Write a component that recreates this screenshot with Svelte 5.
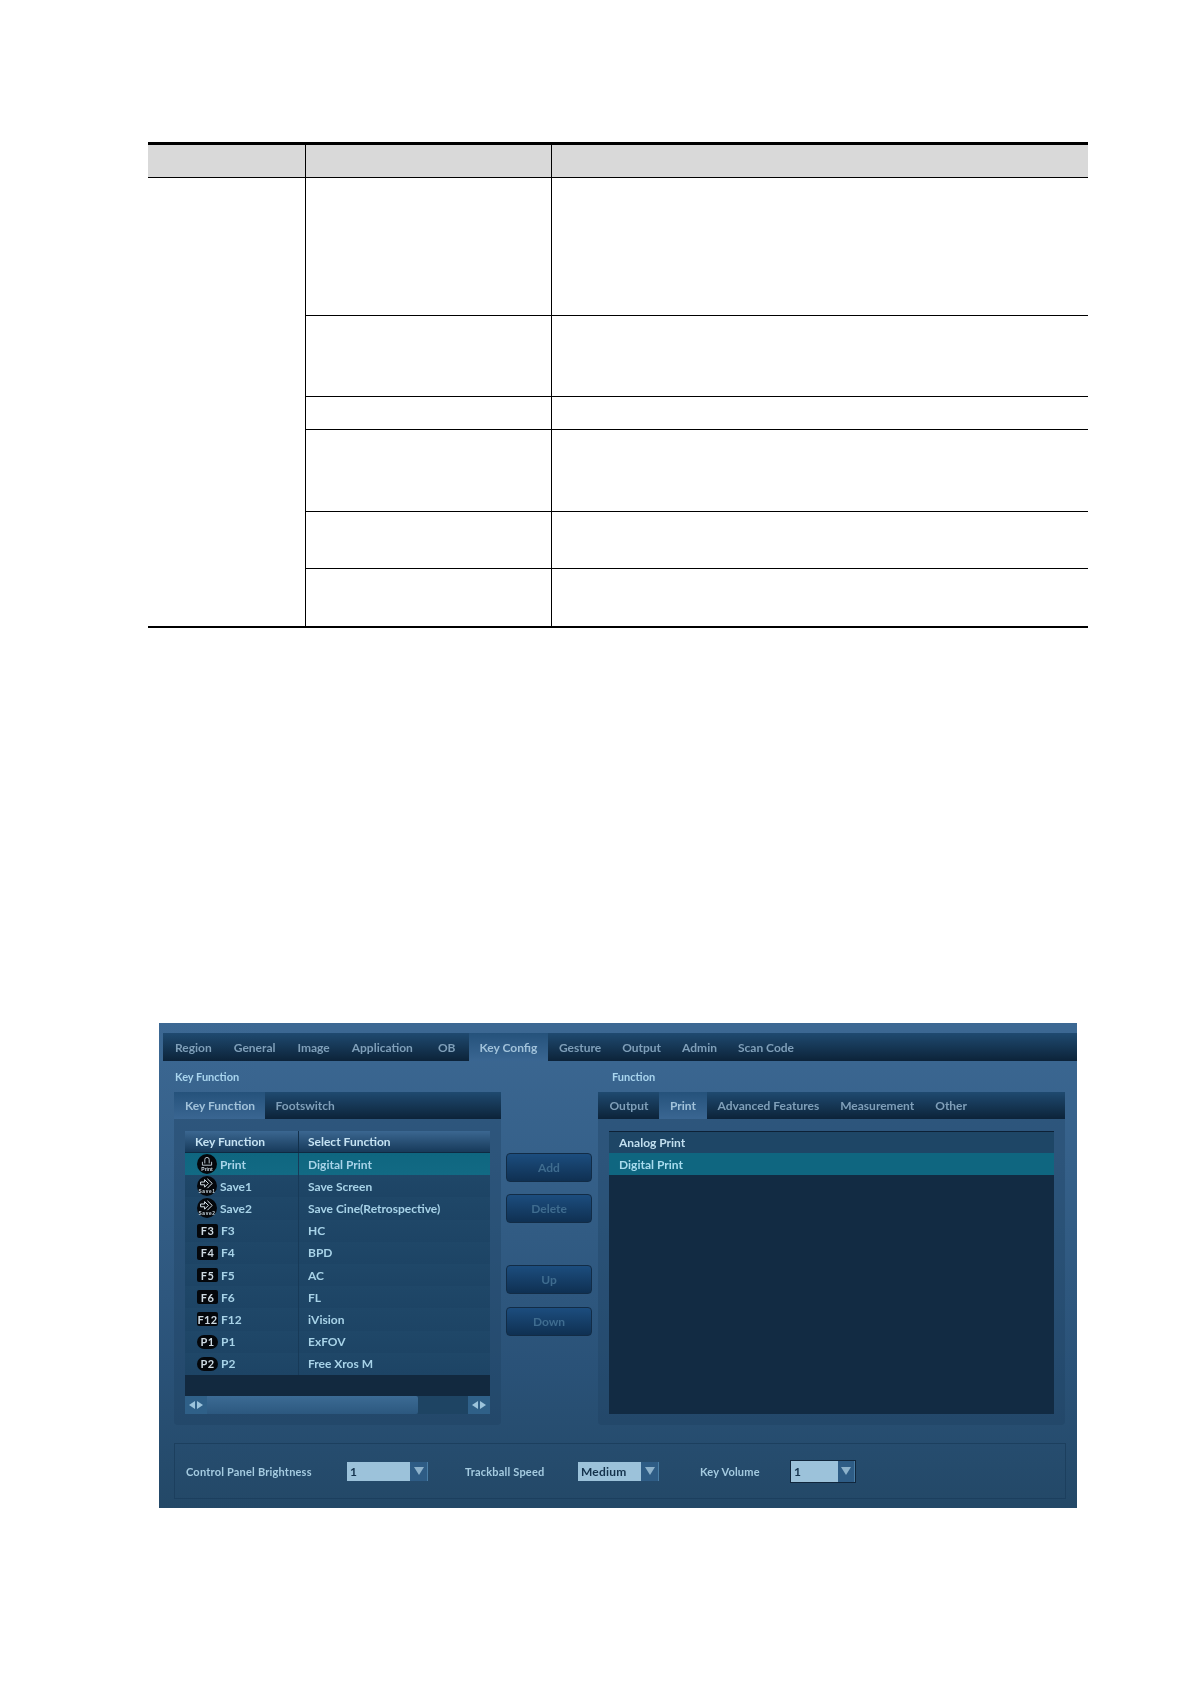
<script>
  const mainTabs = ['Region', 'General', 'Image', 'Application', 'OB', 'Key Config', 'Gesture', 'Output', 'Admin', 'Scan Code']
  const functionTabs = ['Output', 'Print', 'Advanced Features', 'Measurement', 'Other']

  const rows = [
    { icon: 'print', name: 'Print', fn: 'Digital Print', selected: true },
    { icon: 'save', tag: 'Save1', name: 'Save1', fn: 'Save Screen' },
    { icon: 'save', tag: 'Save2', name: 'Save2', fn: 'Save Cine(Retrospective)' },
    { icon: 'rect', name: 'F3', fn: 'HC' },
    { icon: 'rect', name: 'F4', fn: 'BPD' },
    { icon: 'rect', name: 'F5', fn: 'AC' },
    { icon: 'rect', name: 'F6', fn: 'FL' },
    { icon: 'rect', name: 'F12', fn: 'iVision' },
    { icon: 'pill', name: 'P1', fn: 'ExFOV' },
    { icon: 'pill', name: 'P2', fn: 'Free Xros M' }
  ]

  const docRows = [137, 81, 33, 82, 57, 58]
</script>

<div class="page">
  <table class="doc">
    <colgroup>
      <col class="c1" />
      <col class="c2" />
      <col />
    </colgroup>
    <thead>
      <tr><th></th><th></th><th></th></tr>
    </thead>
    <tbody>
      {#each docRows as height, i}
        <tr style="height: {height}px">
          {#if i === 0}
            <td class="merged" rowspan={docRows.length}></td>
          {/if}
          <td class:first={i === 0}></td>
          <td class:first={i === 0}></td>
        </tr>
      {/each}
    </tbody>
  </table>

  <div class="panel">
    <div class="tabbar main">
      {#each mainTabs as tab}
        <span class="tab" class:active={tab === 'Key Config'}>{tab}</span>
      {/each}
    </div>

    <div class="sections">
      <section>
        <h3>Key Function</h3>
        <div class="tabbar sub">
          <span class="tab first active">Key Function</span>
          <span class="tab">Footswitch</span>
        </div>
        <div class="well">
          <div class="keys">
            <div class="keys-head">
              <span>Key Function</span>
              <span>Select Function</span>
            </div>
            {#each rows as row}
              <div class="keys-row" class:selected={row.selected}>
                <span class="key">
                  {#if row.icon === 'print'}
                    <svg class="round" viewBox="0 0 20 20" aria-hidden="true">
                      <circle cx="10" cy="10" r="10" fill="#05070b" />
                      <path d="M7.8 9.4V5.6a2.2 2.2 0 0 1 4.4 0v3.8M5.4 7.8v3.4h9.2V7.8" fill="none" stroke="#c9d6df" stroke-width=".9" />
                      <text x="10" y="17.2" text-anchor="middle">Print</text>
                    </svg>
                  {:else if row.icon === 'save'}
                    <svg class="round" viewBox="0 0 20 20" aria-hidden="true">
                      <circle cx="10" cy="10" r="10" fill="#05070b" />
                      <path d="M3.6 6h4V3.6l3.8 3.8-3.8 3.8V8.8h-4zM10.4 2.8l4.8 4.6-4.8 4.8" fill="none" stroke="#d5e0e8" stroke-width="1" />
                      <text class="spaced" x="10" y="17" text-anchor="middle">{row.tag}</text>
                    </svg>
                  {:else}
                    <span class="badge" class:pill={row.icon === 'pill'}>{row.name}</span>
                  {/if}
                  {row.name}
                </span>
                <span class="fn">{row.fn}</span>
              </div>
            {/each}
            <div class="keys-empty"></div>
            <div class="scroll">
              <span class="arrows">
                <i class="tri left"></i><i class="tri right"></i>
              </span>
              <span class="thumb"></span>
              <span class="arrows end">
                <i class="tri left"></i><i class="tri right"></i>
              </span>
            </div>
          </div>
        </div>
      </section>

      <div class="actions">
        <button disabled>Add</button>
        <button disabled>Delete</button>
        <button disabled class="push">Up</button>
        <button disabled class="last">Down</button>
      </div>

      <section>
        <h3 class="fn-title">Function</h3>
        <div class="tabbar sub fn-tabs">
          {#each functionTabs as tab}
            <span class="tab" class:active={tab === 'Print'}>{tab}</span>
          {/each}
        </div>
        <div class="well">
          <div class="list">
            <div class="list-row">Analog Print</div>
            <div class="list-row selected">Digital Print</div>
          </div>
        </div>
      </section>
    </div>

    <div class="settings">
      <span class="label brightness">Control Panel Brightness</span>
      <span class="select">
        <span class="value">1</span><span class="drop"><i></i></span>
      </span>
      <span class="label speed">Trackball Speed</span>
      <span class="select">
        <span class="value">Medium</span><span class="drop"><i></i></span>
      </span>
      <span class="label volume">Key Volume</span>
      <span class="select focus">
        <span class="value">1</span><span class="drop"><i></i></span>
      </span>
    </div>
  </div>
</div>

<style>
  :global(body) {
    margin: 0;
    background: #fff;
  }

  .page {
    width: 1191px;
    height: 1684px;
    padding-top: 142px;
    box-sizing: border-box;
    overflow: hidden;
    font-family: Lato, "Open Sans", sans-serif;
  }

  /* document table above the screenshot */
  .doc {
    width: 940px;
    margin-left: 148px;
    border-collapse: separate;
    border-spacing: 0;
    table-layout: fixed;
    border-top: 3px solid #000;
    border-bottom: 2px solid #000;
  }

  .c1 {
    width: 157px;
  }

  .c2 {
    width: 246px;
  }

  .doc th {
    height: 33px;
    box-sizing: border-box;
    padding: 0;
    background: #d9d9d9;
    border-left: 1px solid #000;
    border-bottom: 1px solid #000;
  }

  .doc th:first-child {
    border-left: none;
  }

  .doc td {
    padding: 0;
    border-left: 1px solid #000;
    border-top: 1px solid #000;
  }

  .doc td.merged {
    border: none;
  }

  .doc td.first {
    border-top: none;
  }

  /* ultrasound preset screen */
  .panel {
    width: 918px;
    height: 485px;
    margin: 395px 0 0 159px;
    padding: 10px 0 0 4px;
    box-sizing: border-box;
    background: linear-gradient(#3c6893 0, #356089 30%, #2a5278 70%, #234867 100%);
    filter: blur(0.35px);
  }

  .tabbar {
    display: flex;
    align-items: stretch;
    background: linear-gradient(#1f4a70, #0c2339);
  }

  .tabbar.main {
    height: 28px;
    padding-left: 1px;
  }

  .tab {
    display: flex;
    align-items: center;
    padding: 0 10.5px;
    color: #7f9fb9;
    font-size: 12px;
    font-weight: 700;
    white-space: nowrap;
  }

  .main .tab:nth-child(-n+6) {
    padding: 0 11px;
  }

  .main .tab:nth-child(5) {
    padding: 0 13px 0 14px;
  }

  .tab.active {
    color: #a1c2da;
    background: linear-gradient(#25527b, #3a6692);
  }

  .sections {
    display: grid;
    grid-template-columns: 327px 97px 467px;
    padding-left: 11px;
  }

  h3 {
    height: 31px;
    margin: 0;
    padding-left: 1px;
    box-sizing: border-box;
    display: flex;
    align-items: center;
    color: #a9d5ee;
    font-size: 11px;
    font-weight: 700;
  }

  .tabbar.sub {
    height: 27px;
  }

  .fn-tabs {
    padding-left: 1px;
  }

  .fn-tabs .tab.active {
    padding: 0 11px;
  }

  .tab.first {
    padding: 0 11px;
    width: 91px;
    box-sizing: border-box;
  }

  .fn-title {
    padding-left: 14px;
  }

  .well {
    height: 306px;
    padding: 12px 11px 11px;
    box-sizing: border-box;
    background: rgba(28, 62, 94, 0.35);
    border-radius: 0 0 4px 4px;
  }

  .keys {
    display: flex;
    flex-direction: column;
    height: 283px;
    background: #1f4767;
  }

  .keys-head {
    display: grid;
    grid-template-columns: 113px 1fr;
    height: 22px;
    background: linear-gradient(#3b6791, #173a5a);
    border-bottom: 1px solid #0f2a42;
    box-sizing: border-box;
    color: #c5e2f2;
    font-size: 12px;
    font-weight: 700;
  }

  .keys-head span {
    display: flex;
    align-items: center;
    padding-left: 10px;
  }

  .keys-head span + span {
    border-left: 1px solid #12304b;
    padding-left: 9px;
  }

  .keys-row {
    display: grid;
    grid-template-columns: 113px 1fr;
    height: 22.2px;
    color: #a8d3e8;
    font-size: 12px;
    font-weight: 700;
    background: linear-gradient(#1f4768, #1d4465);
  }

  .keys-row.selected {
    background: linear-gradient(#0f6680, #126a84);
  }

  .key {
    display: flex;
    align-items: center;
    gap: 3px;
    padding-left: 12px;
  }

  .fn {
    display: flex;
    align-items: center;
    padding-left: 9px;
    border-left: 1px solid #173a58;
  }

  .round {
    width: 20px;
    height: 20px;
    flex: none;
  }

  .round text {
    fill: #c9d6df;
    font-family: "Liberation Sans", sans-serif;
    font-size: 5px;
  }

  .round text.spaced {
    font-size: 4.8px;
    letter-spacing: 0.6px;
  }

  .badge {
    width: 21px;
    height: 14px;
    flex: none;
    display: flex;
    align-items: center;
    justify-content: center;
    background: #04070b;
    border-radius: 2px;
    color: #cfdbe3;
    font-size: 11px;
    letter-spacing: 0.4px;
  }

  .badge.pill {
    border-radius: 7px;
  }

  .keys-empty {
    height: 21px;
    background: #12293f;
  }

  .scroll {
    display: flex;
    height: 18px;
    background: #1e4463;
  }

  .arrows {
    width: 22px;
    flex: none;
    display: flex;
    align-items: center;
    justify-content: center;
    gap: 2px;
    background: #2f6088;
  }

  .arrows.end {
    margin-left: auto;
  }

  .tri {
    width: 0;
    height: 0;
    border-top: 4px solid transparent;
    border-bottom: 4px solid transparent;
  }

  .tri.left {
    border-right: 6px solid #9cc4dc;
  }

  .tri.right {
    border-left: 6px solid #9cc4dc;
  }

  .thumb {
    width: 211px;
    border-radius: 0 2px 2px 0;
    background: linear-gradient(#3c6b94, #2c587f);
  }

  .actions {
    display: flex;
    flex-direction: column;
    gap: 12px;
    padding: 92px 0 0 5px;
    box-sizing: border-box;
  }

  .actions button {
    width: 86px;
    height: 29px;
    padding: 0;
    border: 1px solid #122c46;
    border-radius: 4px;
    background: linear-gradient(#1c4d7e, #0f3052);
    color: #3f6c8f;
    font-family: inherit;
    font-size: 12px;
    font-weight: 700;
  }

  .actions .push {
    margin-top: 30px;
  }

  .actions .last {
    margin-top: 1px;
  }

  .list {
    height: 283px;
    background: #122b43;
  }

  .list-row {
    display: flex;
    align-items: center;
    height: 22px;
    padding-left: 10px;
    box-sizing: border-box;
    background: #1e4666;
    border-top: 1px solid #0d2136;
    color: #c2dfef;
    font-size: 12px;
    font-weight: 700;
  }

  .list-row.selected {
    background: #0f6680;
    border-top: none;
    color: #a8dcee;
  }

  .settings {
    display: flex;
    align-items: center;
    width: 892px;
    height: 56px;
    margin-top: 18px;
    margin-left: 11px;
    box-sizing: border-box;
    border: 1px solid #1c3f5e;
    color: #a5cbe0;
    font-size: 11px;
    font-weight: 700;
    letter-spacing: 0.2px;
  }

  .label {
    flex: none;
  }

  .brightness {
    width: 161px;
    padding-left: 11px;
  }

  .speed {
    width: 113px;
    margin-left: 37px;
  }

  .volume {
    width: 91px;
    margin-left: 41px;
  }

  .select {
    display: flex;
    width: 81px;
    height: 19px;
    flex: none;
  }

  .select .value {
    width: 63px;
    padding-left: 3px;
    box-sizing: border-box;
    background: #9cc2da;
    color: #14324c;
    font-size: 12px;
    line-height: 19px;
  }

  .select .drop {
    flex: 1;
    display: flex;
    align-items: center;
    justify-content: center;
    background: #2e5c85;
    border-right: 1px solid #4a7ea6;
  }

  .select .drop i {
    width: 0;
    height: 0;
    border-left: 5px solid transparent;
    border-right: 5px solid transparent;
    border-top: 8px solid #8db2cb;
  }

  .select.focus {
    width: 64px;
    height: 21px;
    outline: 1px solid #10263c;
  }

  .select.focus .value {
    width: 47px;
    line-height: 21px;
  }
</style>
